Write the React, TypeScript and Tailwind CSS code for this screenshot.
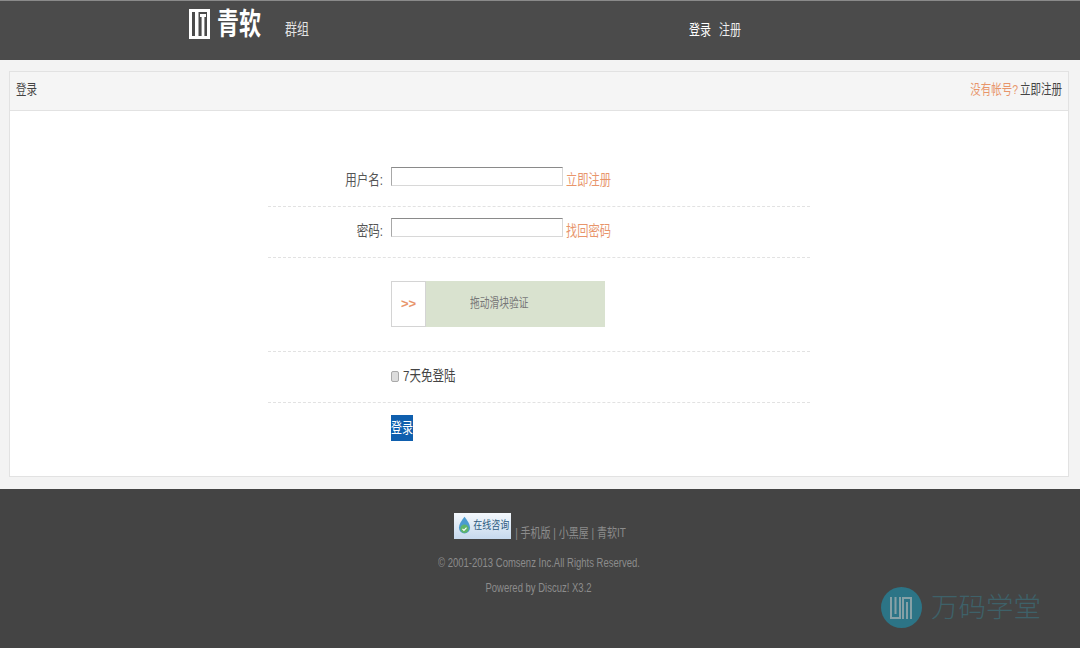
const cjk = "font-['Liberation_Sans','Noto_Sans_CJK_SC',sans-serif]";

// the source picture is stretched vertically, so text is drawn small and pulled taller
const Tall = ({ children, className = '' }: { children: React.ReactNode; className?: string }) => (
  <span className={`inline-block whitespace-nowrap scale-y-[1.3] ${className}`}>{children}</span>
);

const FormRow = ({ label, children, className }: { label?: string; children: React.ReactNode; className: string }) => (
  <div className={`flex items-start border-b border-dashed border-[#e2e2e2] ${className}`}>
    <div className="w-[123px] pr-[8px] text-right text-[11.5px] leading-[26px] text-[#555]">
      {label && <Tall>{label}</Tall>}
    </div>
    <div className="flex items-start">{children}</div>
  </div>
);

const TextInput = () => (
  <div className="h-[19px] w-[172px] border border-[#d8d8d8] border-t-[#8a8a8a] border-l-[#a8a8a8] bg-white" />
);

const ItLogo = () => (
  <svg width="21" height="30" viewBox="0 0 21 30" className="shrink-0">
    <path fill="#fff" fillRule="evenodd" d="M0 0h21v30H0zM3 3v24h15V3z" />
    <path fill="#fff" d="M6 3h3.5v24H6zM11 5h6v3h-1.6v19h-2.8V8H11z" />
  </svg>
);

const WatermarkLogo = () => (
  <svg width="41" height="41" viewBox="0 0 41 41" className="shrink-0">
    <circle cx="20.5" cy="20.5" r="20.5" fill="#2c7486" />
    <path fill="none" stroke="#86a0a6" strokeWidth="2" d="M10 10v21h9V10M14.5 10v17M22 32V11h8v21M26 15v17" />
  </svg>
);

const ChatIcon = () => (
  <svg width="13" height="20" viewBox="0 0 14 20" className="shrink-0">
    <path fill="#4a9bd0" d="M7 0C10 4 13 8 13 12a6 6 0 0 1-12 0C1 8 4 4 7 0z" />
    <circle cx="7" cy="13" r="4.5" fill="#5fb56a" />
    <path fill="none" stroke="#fff" strokeWidth="1.2" d="M4.8 13l1.6 1.7 2.8-3" />
  </svg>
);

const App = () => {
  return (
    <div className={`flex h-[648px] w-[1080px] flex-col overflow-hidden bg-[#f3f3f3] ${cjk}`}>
      <header className="flex h-[60px] shrink-0 items-start border-t border-[#8a8a8a] bg-[#4b4b4b] pl-[189px] text-white">
        <div className="mt-[8px] flex items-start gap-[7px]">
          <ItLogo />
          <span className="mt-[2px] inline-block scale-y-[1.35] text-[22px] font-bold leading-[28px]">青软</span>
        </div>
        <span className="ml-[24px] mt-[19px] text-[12px] leading-[20px] text-[#e4e4e4]">
          <Tall>群组</Tall>
        </span>
        <span className="ml-[380px] mt-[19px] text-[11px] leading-[20px]">
          <Tall>登录</Tall>
        </span>
        <span className="ml-[8px] mt-[19px] text-[11px] leading-[20px] text-[#eeeeee]">
          <Tall>注册</Tall>
        </span>
      </header>

      <main className="flex-1 pb-[12px] pl-[9px] pr-[11px] pt-[11px]">
        <div className="h-full border border-[#e2e2e2] bg-white">
          <div className="flex h-[39px] items-center justify-between border-b border-[#e2e2e2] bg-[#f5f5f5] pb-[2px] pl-[6px] pr-[6px] text-[10.5px] text-[#444]">
            <Tall>登录</Tall>
            <Tall>
              <span className="text-[#e8956b]">没有帐号?</span>
              <span className="ml-[2px] text-[#444]">立即注册</span>
            </Tall>
          </div>

          <div className="mx-auto w-[542px] pt-[44px]">
            <FormRow label="用户名:" className="h-[52px] pt-[12px]">
              <TextInput />
              <span className="ml-[3px] text-[11.25px] leading-[26px] text-[#e8956b]">
                <Tall>立即注册</Tall>
              </span>
            </FormRow>
            <FormRow label="密码:" className="h-[51px] pt-[11px]">
              <TextInput />
              <span className="ml-[3px] text-[11.25px] leading-[26px] text-[#e8956b]">
                <Tall>找回密码</Tall>
              </span>
            </FormRow>
            <FormRow className="h-[94px] pt-[23px]">
              <div className="flex h-[46px] w-[214px] items-stretch bg-[#d9e2cf]">
                <div className="flex w-[35px] items-center justify-center border border-[#d4d4d4] bg-white text-[13px] font-bold text-[#e8956b]">
                  &gt;&gt;
                </div>
                <div className="flex flex-1 items-center pb-[2px] pl-[44px] text-[9.75px] text-[#777]">
                  <Tall>拖动滑块验证</Tall>
                </div>
              </div>
            </FormRow>
            <FormRow className="h-[51px] pt-[12px]">
              <div className="mt-[7px] h-[11px] w-[8px] rounded-[2px] border border-[#aaaaaa] bg-[#dddddd]" />
              <span className="ml-[4px] text-[11.5px] leading-[24px] text-[#444]">
                <Tall>7天免登陆</Tall>
              </span>
            </FormRow>
            <div className="flex pt-[12px]">
              <div className="w-[123px]" />
              <button className="flex h-[26px] w-[22px] items-center justify-center bg-[#0f5fae] text-[11px] text-white">
                <Tall>登录</Tall>
              </button>
            </div>
          </div>
        </div>
      </main>

      <footer className="relative flex h-[159px] shrink-0 flex-col items-center bg-[#444444] pt-[24px] text-[9.5px] text-[#8c8c8c]">
        <div className="flex items-start">
          <div className="flex h-[26px] w-[57px] items-center gap-[2px] bg-gradient-to-b from-[#f4f8fc] to-[#c6d9ee] pl-[4px]">
            <ChatIcon />
            <Tall className="text-[9px] text-[#2c5a7e]">在线咨询</Tall>
          </div>
          <span className="ml-[4px] mt-[10px] text-[10px] leading-[20px]">
            <Tall>| 手机版 | 小黑屋 | 青软IT</Tall>
          </span>
        </div>
        <p className="mt-[10px] pr-[2px] leading-[20px]">
          <Tall>© 2001-2013 Comsenz Inc.All Rights Reserved.</Tall>
        </p>
        <p className="mt-[5px] pr-[3px] leading-[20px]">
          <Tall>Powered by Discuz! X3.2</Tall>
        </p>

        <div className="absolute left-[881px] top-[98px] flex items-center gap-[9px]">
          <WatermarkLogo />
          <span className="text-[27.5px] font-light leading-[41px] text-[#3e6169]">万码学堂</span>
        </div>
      </footer>
    </div>
  );
};

export default App;
